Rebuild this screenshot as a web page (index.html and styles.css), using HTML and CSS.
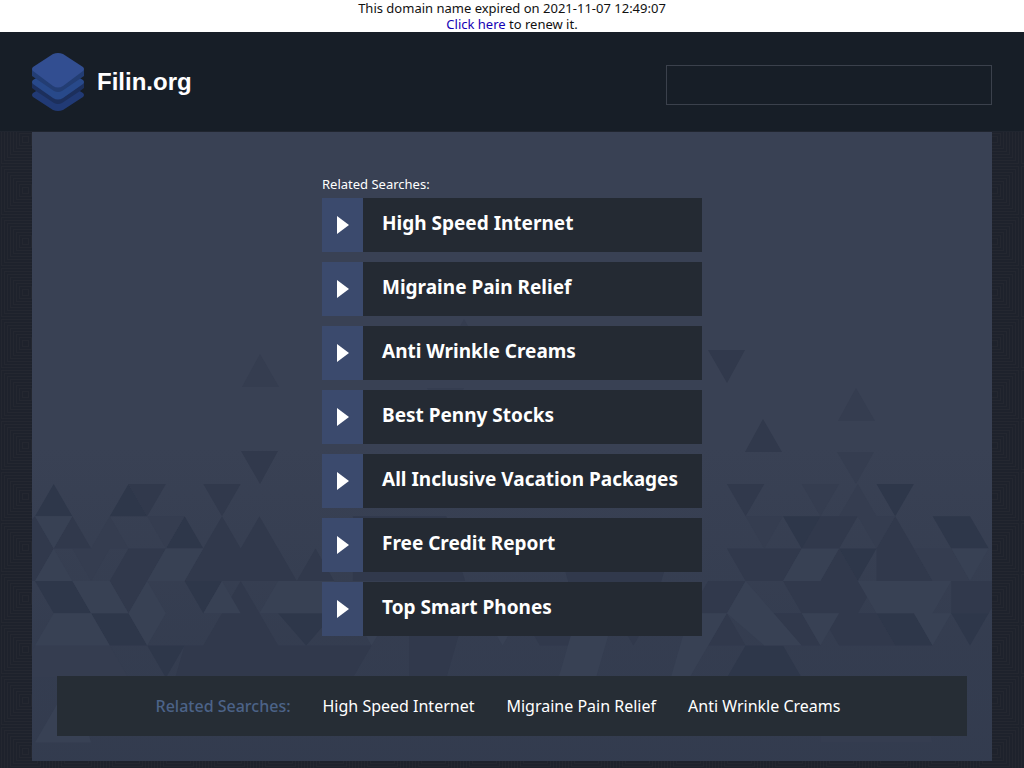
FILE: index.html
```html
<!DOCTYPE html>
<html lang="en">
<head>
<meta charset="utf-8">
<meta name="viewport" content="width=device-width, initial-scale=1">
<title>Filin.org</title>
<link rel="stylesheet" href="styles.css">
</head>
<body>
<div class="notice">This domain name expired on 2021-11-07 12:49:07<br><a href="#">Click here</a> to renew it.</div>
<div class="page">
  <svg class="texture" aria-hidden="true">
    <defs>
      <pattern id="rings" y="31" width="51" height="51" patternUnits="userSpaceOnUse">
        <rect width="51" height="51" fill="#1e222c"/>
        <g fill="none" stroke="#242730">
          <rect x="1.5" y="1.5" width="48" height="48"/>
          <rect x="4.5" y="4.5" width="42" height="42"/>
          <rect x="7.5" y="7.5" width="36" height="36"/>
          <rect x="10.5" y="10.5" width="30" height="30"/>
          <rect x="13.5" y="13.5" width="24" height="24"/>
          <rect x="16.5" y="16.5" width="18" height="18"/>
          <rect x="19.5" y="19.5" width="12" height="12"/>
          <rect x="22.5" y="22.5" width="6" height="6"/>
        </g>
      </pattern>
    </defs>
    <rect width="100%" height="100%" fill="url(#rings)"/>
  </svg>
  <header class="header">
    <div class="brand">
      <svg class="logo" viewBox="0 0 52 58" aria-hidden="true">
        <path fill="#213a75" d="M22 27.500Q26 25 30 27.500L51 40Q53 42 51 44L31 57Q26 59 21 57L1 44Q-1 42 1 40Z"/>
        <path fill="#1c2f5c" d="M4 38L0 35V29L22 43Q26 45 30 43L52 29V35L48 38L30 50Q26 52 22 50Z"/>
        <path fill="#28498a" d="M22 14.500Q26 12 30 14.500L51 27Q53 29 51 31L31 45Q26 48 21 45L1 31Q-1 29 1 27Z"/>
        <path fill="#233d73" d="M0 16L22 32Q26 34 30 32L52 16V23L30 38Q26 40 22 38L0 23Z"/>
        <path fill="#324e91" d="M21 1Q26 -1 31 1L51 14Q53 16 51 18L31 33Q26 36 21 33L1 18Q-1 16 1 14Z"/>
      </svg>
      <h1 class="name">Filin.org</h1>
    </div>
    <input class="search" type="text" aria-label="Search">
  </header>
  <main class="panel">
    <svg class="triangles" viewBox="0 0 960 629" preserveAspectRatio="xMidYMax slice" aria-hidden="true">
      <defs>
        <linearGradient id="fade" x1="0" y1="0" x2="0" y2="1">
          <stop offset="0.500" stop-color="#2f384b" stop-opacity="0"/>
          <stop offset="0.800" stop-color="#2f384b" stop-opacity="0.450"/>
          <stop offset="1" stop-color="#2f384b" stop-opacity="0.600"/>
        </linearGradient>
      </defs>
      <rect width="960" height="629" fill="url(#fade)"/>
      <path class="mid" d="M676 218h37l-18 33zM209 319h37l-18 33zM731 287l19 33h-37z"/>
      <path class="soft" d="M228 222l19 33h-37zM824 256l19 33h-37zM805 320h37l-18 32zM432 187l19 33h-37zM395 256h37l-18 33z"/>
      <g transform="translate(3 352) scale(18.700 32.300)">
        <path class="dark" d="M1 0l1 1h-2zM5 0l1 1h-2zM45 0h2l-1 1zM8 1l1 1h-2zM40 1h2l1 1h-2zM48 1h2l1 1h-2zM43 2h2l-1 1zM0 3h2l1 1h-2zM8 3h2l-1 1zM3 4h2l1 1h-2zM45 4h2l1 1h-2zM49 4h2l-1 1zM13 4h3l-1.500 1zM6 5h2l-1 1zM38 5h2l1 1h-4z"/>
        <path class="mid" d="M5 0h2l-1 1zM9 0h2l-1 1zM37 0h2l-1 1zM0 1l1 1h-2.600zM2 1l1 1h-2zM10 1l1 1h-2zM12 1l2 2h-1l-1-1h-1zM42 1h2l-1 1h-2zM46 1l1 1h-2zM1 2l-1 1h-1.600v-1zM5 2h2l-1 1h-2zM9 2h4l1 1h-6zM15 2l1 1h-2zM37 2h4l-1 1h-2zM43 2l1 1h-2zM45 2h2l1 1h-3zM4 3h2l-1 1zM36 3h2l-1 1h-2zM40 3h5l-1 1h-3zM49 3h3l-1 1h-2zM11 3l2 2h-4zM39 4h2l1 1h-2zM42 4h3l1 1h-3zM37 4l1 1h-2zM8 5h10l-2 2h-9zM20 4h3l-1 2h-2zM26 4h2l1 1h-2zM31 4h2l-1 1zM17 1h5l1 2h-6zM28 2h6l-1 2h-4z"/>
        <path class="soft" d="M41 0h2l-1 1zM44 0l1 1h-2zM4 1l1 1h-2zM6 1h2l-1 1zM38 1h2l-1 1zM44 1h2l-1 1zM2 2h2l-1 1zM47 2h2l1 1h-2zM0 5h4l1 1h-6zM42 6h5l1 2h-6z"/>
        <path class="light" d="M0 1h2l-1 1zM1 2l1 1h-2zM7 2h2l-1 1h-2zM41 2h2l-1 1h-2zM49 2h2l-1 1zM2 3h2l1 1h-2zM6 3l1 1-1 1-1-1zM10 3l1 1h-2zM13 3h3l1 1h-5zM38 3l3 2h-2l-2-1zM44 3h2l-1 1zM46 3h3l-1 1h-3zM1 4h2l1 1h-4zM41 4h2l-1 1zM47 4h2l-1 1zM17 4h2l-1 1zM24 4h2l-1 1zM29 4h2l-1 2h-2zM2 6l1 2h-3zM35 4h2l-2 2h-1z"/>
      </g>
    </svg>
    <section class="results" aria-labelledby="results-title">
      <h2 class="results-title" id="results-title">Related Searches:</h2>
      <ul class="list">
        <li><a class="item" href="#"><span class="arrow"><svg viewBox="0 0 12 18" aria-hidden="true"><path d="M0 0l12 9-12 9z"/></svg></span><span class="label">High Speed Internet</span></a></li>
        <li><a class="item" href="#"><span class="arrow"><svg viewBox="0 0 12 18" aria-hidden="true"><path d="M0 0l12 9-12 9z"/></svg></span><span class="label">Migraine Pain Relief</span></a></li>
        <li><a class="item" href="#"><span class="arrow"><svg viewBox="0 0 12 18" aria-hidden="true"><path d="M0 0l12 9-12 9z"/></svg></span><span class="label">Anti Wrinkle Creams</span></a></li>
        <li><a class="item" href="#"><span class="arrow"><svg viewBox="0 0 12 18" aria-hidden="true"><path d="M0 0l12 9-12 9z"/></svg></span><span class="label">Best Penny Stocks</span></a></li>
        <li><a class="item" href="#"><span class="arrow"><svg viewBox="0 0 12 18" aria-hidden="true"><path d="M0 0l12 9-12 9z"/></svg></span><span class="label">All Inclusive Vacation Packages</span></a></li>
        <li><a class="item" href="#"><span class="arrow"><svg viewBox="0 0 12 18" aria-hidden="true"><path d="M0 0l12 9-12 9z"/></svg></span><span class="label">Free Credit Report</span></a></li>
        <li><a class="item" href="#"><span class="arrow"><svg viewBox="0 0 12 18" aria-hidden="true"><path d="M0 0l12 9-12 9z"/></svg></span><span class="label">Top Smart Phones</span></a></li>
      </ul>
    </section>
    <nav class="related" aria-label="Related searches">
      <span class="related-title">Related Searches:</span>
      <a href="#">High Speed Internet</a>
      <a href="#">Migraine Pain Relief</a>
      <a href="#">Anti Wrinkle Creams</a>
    </nav>
  </main>
</div>
</body>
</html>
```
FILE: styles.css
```css
* {
  box-sizing: border-box;
}

body {
  margin: 0;
  min-height: 100vh;
  display: flex;
  flex-direction: column;
  background: #1e222c;
  color: #fff;
  font-family: "Noto Sans", sans-serif;
}

a {
  color: inherit;
  text-decoration: none;
}

.notice {
  background: #fff;
  color: #111;
  font-size: 13px;
  line-height: 16px;
  text-align: center;
}

.notice a {
  color: #1400b4;
}

.page {
  position: relative;
  flex: 1;
  padding-bottom: 7px;
}

.texture {
  position: absolute;
  inset: 0;
  width: 100%;
  height: 100%;
}

.header {
  position: relative;
  display: flex;
  align-items: center;
  justify-content: space-between;
  gap: 32px;
  padding: 21px 32px 20px;
  background: #171e27;
  border-bottom: 1px solid #20252f;
}

.brand {
  display: flex;
  align-items: center;
  gap: 13px;
}

.logo {
  display: block;
  width: 52px;
  height: 58px;
}

.name {
  margin: 0;
  font: bold 24px/28px "Liberation Sans", sans-serif;
}

.search {
  width: 34%;
  min-width: 160px;
  height: 40px;
  margin-top: 6px;
  padding: 0 12px;
  border: 1px solid #3b414c;
  border-radius: 0;
  background: transparent;
  color: #fff;
  font: inherit;
}

.panel {
  position: relative;
  margin: 0 32px;
  padding: 44px 25px 25px;
  background: #394154;
}

.triangles {
  position: absolute;
  inset: 0;
  width: 100%;
  height: 100%;
}

.dark {
  fill: #2e374a;
}

.mid {
  fill: #31394c;
}

.soft {
  fill: #353d50;
}

.light {
  fill: #384154;
}

.results {
  position: relative;
  max-width: 380px;
  margin: 0 auto 40px;
}

.results-title {
  margin: 0 0 6px;
  font-size: 13px;
  font-weight: normal;
  line-height: 16px;
}

.list {
  display: grid;
  gap: 10px;
  margin: 0;
  padding: 0;
  list-style: none;
}

.item {
  display: flex;
  min-height: 54px;
  background: #242a33;
}

.arrow {
  display: flex;
  align-items: center;
  justify-content: center;
  width: 41px;
  background: #3b4a6d;
}

.arrow svg {
  width: 12px;
  height: 18px;
  fill: #fff;
}

.label {
  flex: 1;
  padding: 11px 0 15px 19px;
  font-size: 19px;
  font-weight: bold;
  line-height: 28px;
}

.related {
  position: relative;
  display: flex;
  flex-wrap: wrap;
  align-items: center;
  justify-content: center;
  gap: 8px 32px;
  min-height: 60px;
  padding: 0 44px 0 16px;
  background: #262d35;
  font-size: 16px;
  line-height: 24px;
}

.related-title {
  color: #4c6388;
  font-weight: 500;
}
```
